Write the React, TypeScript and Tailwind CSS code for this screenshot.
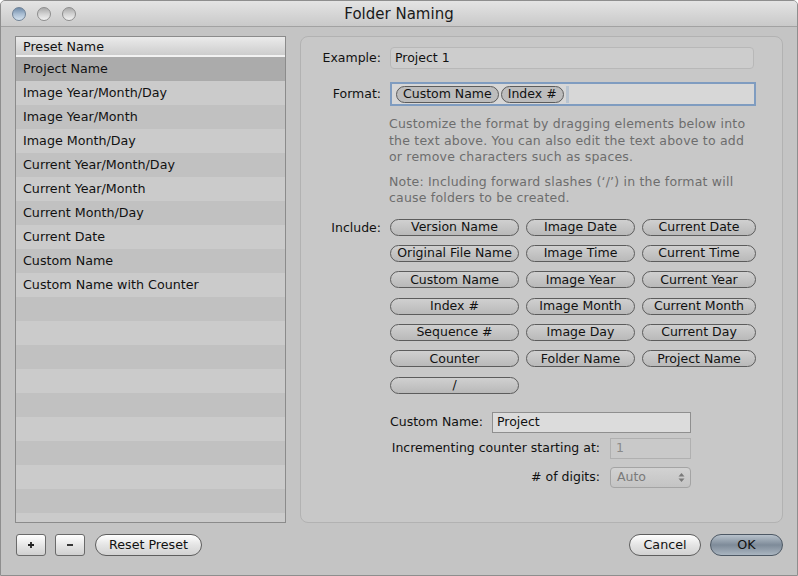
import React from "react";

const FONT = { fontFamily: '"DejaVu Sans", "Liberation Sans", sans-serif' };

const presets = [
  "Project Name",
  "Image Year/Month/Day",
  "Image Year/Month",
  "Image Month/Day",
  "Current Year/Month/Day",
  "Current Year/Month",
  "Current Month/Day",
  "Current Date",
  "Custom Name",
  "Custom Name with Counter",
];

const include = [
  ["Version Name", "Image Date", "Current Date"],
  ["Original File Name", "Image Time", "Current Time"],
  ["Custom Name", "Image Year", "Current Year"],
  ["Index #", "Image Month", "Current Month"],
  ["Sequence #", "Image Day", "Current Day"],
  ["Counter", "Folder Name", "Project Name"],
  ["/", "", ""],
];

function Light({ blue }: { blue?: boolean }) {
  return (
    <div
      className={
        blue
          ? "w-[14px] h-[14px] rounded-full border border-[#6f8296] bg-gradient-to-b from-[#6e8aa8] via-[#a9bdd2] to-[#d4e2ef]"
          : "w-[14px] h-[14px] rounded-full border border-[#8d8d8d] bg-gradient-to-b from-[#a9a9a9] via-[#d2d2d2] to-[#f2f2f2]"
      }
    />
  );
}

function Pill({ label, w }: { label: string; w: string }) {
  return (
    <div
      className={`${w} h-[17px] rounded-full border border-[#5c5c5c] bg-gradient-to-b from-[#d0d0d0] to-[#b9b9b9] flex items-center justify-center text-[12.5px] leading-none text-[#111]`}
    >
      {label}
    </div>
  );
}

export default function App() {
  const rows = Array.from({ length: 20 });
  return (
    <div
      style={FONT}
      className="w-[798px] h-[576px] bg-[#c4c4c4] flex flex-col overflow-hidden border border-[#8e8e8e] rounded-t-[5px] text-[#111]"
    >
      {/* Title bar */}
      <div className="h-[26px] shrink-0 flex items-center relative bg-gradient-to-b from-[#e4e4e4] to-[#c9c9c9] border-b border-[#a2a2a2]">
        <div className="flex items-center gap-[11px] pl-[11px]">
          <Light blue />
          <Light />
          <Light />
        </div>
        <div className="absolute inset-0 flex items-center justify-center pt-[1px] text-[15px] text-[#1a1a1a]">
          Folder Naming
        </div>
      </div>

      {/* Body */}
      <div className="flex-1 flex flex-col px-[14px] pt-[9px] pb-[19px]">
        <div className="flex gap-[14px] h-[487px]">
          {/* Preset table */}
          <div className="w-[271px] border border-[#8b8b8b] bg-[#c2c2c2] flex flex-col overflow-hidden">
            <div className="h-[20px] shrink-0 flex items-center pl-[7px] pt-[1px] text-[12.7px] bg-gradient-to-b from-[#ebebeb] to-[#cdcdcd] border-b-2 border-[#f2f2f2]">
              Preset Name
            </div>
            <div className="flex flex-col">
              {rows.map((_, i) => (
                <div
                  key={i}
                  className={`h-[24px] shrink-0 flex items-center pl-[7px] text-[12.7px] ${
                    i === 0 ? "bg-[#ababab]" : i % 2 === 1 ? "bg-[#cbcbcb]" : "bg-[#c1c1c1]"
                  }`}
                >
                  {presets[i] ?? ""}
                </div>
              ))}
            </div>
          </div>

          {/* Right panel */}
          <div className="flex-1 rounded-[8px] border border-[#b2b2b2] bg-[#c8c8c8] flex flex-col pt-[10px] text-[12.5px]">
            <div className="flex items-center">
              <div className="w-[80px] text-right">Example:</div>
              <div className="ml-[9px] w-[364px] h-[22px] rounded-[4px] border border-[#b8b8b8] bg-[#cdcdcd] flex items-center pl-[4px]">
                Project 1
              </div>
            </div>
            <div className="flex items-center mt-[13px]">
              <div className="w-[80px] text-right">Format:</div>
              <div className="ml-[9px] w-[366px] h-[24px] border-2 border-[#7f9cc0] bg-[#d7d7d7] flex items-center pl-[4px] gap-[2px]">
                <div className="h-[17px] px-[6px] rounded-full border border-[#5c5c5c] bg-[#bdbdbd] flex items-center">Custom Name</div>
                <div className="h-[17px] px-[6px] rounded-full border border-[#5c5c5c] bg-[#bdbdbd] flex items-center">Index #</div>
                <div className="h-[17px] w-[3px] bg-[#b9c4d0]" />
              </div>
            </div>
            <div className="ml-[88px] mt-[10px] text-[#6d6d6d] leading-[16.5px] w-[362px] tracking-[0.2px]">
              Customize the format by dragging elements below into the text above. You can also edit the text above to add or remove characters such as spaces.
            </div>
            <div className="ml-[88px] mt-[8px] text-[#6d6d6d] leading-[16.5px] w-[362px] tracking-[0.2px]">
              Note: Including forward slashes (‘/’) in the format will cause folders to be created.
            </div>
            <div className="flex mt-[12px]">
              <div className="w-[80px] text-right leading-[17px]">Include:</div>
              <div className="ml-[9px] grid grid-cols-[129px_109px_114px] gap-x-[7px] gap-y-[9.4px]">
                {include.flat().map((t, i) =>
                  t || i === 18 ? (
                    <Pill key={i} label={t} w="w-full" />
                  ) : (
                    <div key={i} />
                  )
                )}
              </div>
            </div>

            <div className="flex items-center justify-end mr-[91px] mt-[18px]">
              <div>Custom Name:</div>
              <div className="ml-[9px] w-[199px] h-[21px] border border-[#8f8f8f] bg-[#dcdcdc] flex items-center pl-[4px]">
                Project
              </div>
            </div>
            <div className="flex items-center justify-end mr-[91px] mt-[5px]">
              <div>Incrementing counter starting at:</div>
              <div className="ml-[10px] w-[81px] h-[21px] border border-[#b0b0b0] bg-[#c9c9c9] flex items-center pl-[5px] text-[#8a8a8a]">
                1
              </div>
            </div>
            <div className="flex items-center justify-end mr-[91px] mt-[8px]">
              <div># of digits:</div>
              <div className="ml-[10px] w-[81px] h-[21px] rounded-[4px] border border-[#a4a4a4] bg-gradient-to-b from-[#d2d2d2] to-[#c4c4c4] flex items-center pl-[6px] pr-[5px] text-[#7a7a7a] justify-between">
                <span>Auto</span>
                <svg width="7" height="11" viewBox="0 0 7 11">
                  <path d="M3.5 1 L6.5 4.5 L0.5 4.5 Z" fill="#7a7a7a" />
                  <path d="M3.5 10 L6.5 6.5 L0.5 6.5 Z" fill="#7a7a7a" />
                </svg>
              </div>
            </div>
          </div>
        </div>

        {/* Bottom buttons */}
        <div className="flex items-center mt-[11px] text-[12.7px]">
          <div className="ml-[1px] w-[30px] h-[22px] rounded-[3px] border border-[#6a6a6a] bg-gradient-to-b from-[#ffffff] via-[#e6e6e6] to-[#d0d0d0] flex items-center justify-center">
            <svg width="8" height="8" viewBox="0 0 8 8">
              <path d="M4 1 V7 M1 4 H7" stroke="#222" strokeWidth="1.8" />
            </svg>
          </div>
          <div className="ml-[9px] w-[30px] h-[22px] rounded-[3px] border border-[#6a6a6a] bg-gradient-to-b from-[#ffffff] via-[#e6e6e6] to-[#d0d0d0] flex items-center justify-center">
            <svg width="8" height="8" viewBox="0 0 8 8">
              <path d="M1 4 H7" stroke="#222" strokeWidth="1.8" />
            </svg>
          </div>
          <div className="ml-[10px] w-[107px] h-[22px] rounded-full border border-[#5e5e5e] bg-gradient-to-b from-[#ffffff] via-[#e4e4e4] to-[#d2d2d2] flex items-center justify-center">
            Reset Preset
          </div>
          <div className="flex-1" />
          <div className="w-[72px] h-[22px] rounded-full border border-[#5e5e5e] bg-gradient-to-b from-[#ffffff] via-[#e4e4e4] to-[#d2d2d2] flex items-center justify-center">
            Cancel
          </div>
          <div className="ml-[9px] w-[73px] h-[22px] rounded-full border border-[#4d5864] bg-gradient-to-b from-[#b8c2cc] via-[#7e8b99] to-[#aab5c0] flex items-center justify-center">
            OK
          </div>
        </div>
      </div>
    </div>
  );
}
